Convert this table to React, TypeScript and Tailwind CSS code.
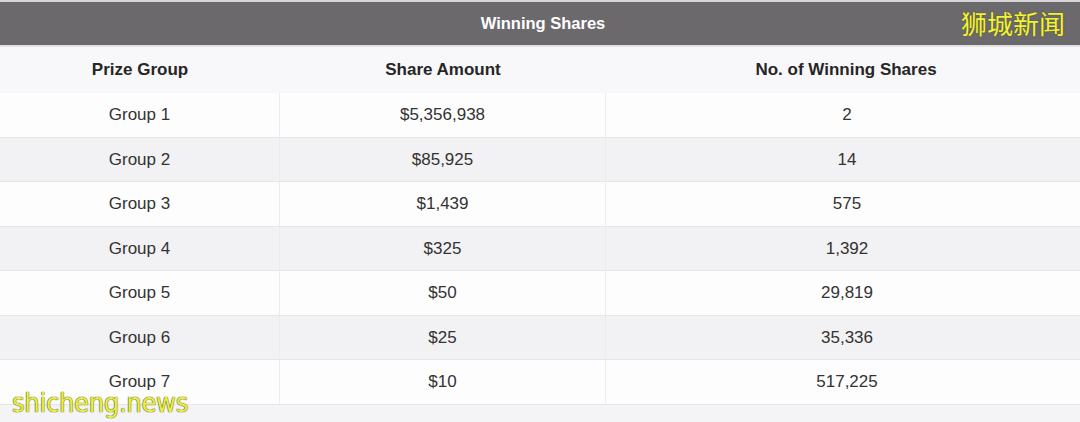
import React from "react";

const rows = [
  ["Group 1", "$5,356,938", "2"],
  ["Group 2", "$85,925", "14"],
  ["Group 3", "$1,439", "575"],
  ["Group 4", "$325", "1,392"],
  ["Group 5", "$50", "29,819"],
  ["Group 6", "$25", "35,336"],
  ["Group 7", "$10", "517,225"],
];

export default function App() {
  return (
    <div
      className="relative w-[1080px] h-[422px] overflow-hidden bg-[#f4f3f6] text-[#333]"
      style={{ fontFamily: '"Liberation Sans", Arial, sans-serif' }}
    >
      <div className="h-[2px] bg-[#d6d5d8]" />
      <div className="h-[43px] bg-[#6b696c] flex items-center justify-center">
        <span className="text-white font-bold text-[16.5px] ml-[6px]">Winning Shares</span>
      </div>
      <div className="h-[2px] bg-[#e2e1e4]" />
      <div className="grid grid-cols-[280px_326px_1fr] h-[46px] bg-[#f8f7f9] items-center text-[17px] font-bold text-[#262626]">
        <div className="text-center">Prize Group</div>
        <div className="text-center">Share Amount</div>
        <div className="text-center pl-[6px]">No. of Winning Shares</div>
      </div>
      {rows.map((r, i) => (
        <div
          key={i}
          className={`grid grid-cols-[280px_326px_1fr] text-[17px] border-b border-[#e6e5e8] ${
            i % 2 === 0 ? "bg-[#fdfdfe] h-[45px]" : "bg-[#f2f1f4] h-[44px]"
          }`}
        >
          <div className="flex items-center justify-center border-r border-[#ecebee]">{r[0]}</div>
          <div className="flex items-center justify-center border-r border-[#ecebee]">{r[1]}</div>
          <div className="flex items-center justify-center pl-[8px]">{r[2]}</div>
        </div>
      ))}
      <div
        className="absolute left-[961px] top-[10px] text-[26px] leading-none text-[#f2f23c]"
        style={{
          fontFamily: '"Noto Sans CJK SC", sans-serif',
          textShadow: "0 0 1px #5a5a20, 0 0 1px #5a5a20",
        }}
      >
        狮城新闻
      </div>
      <div
        className="absolute left-[12px] top-[389px] text-[27px] leading-none tracking-[-0.3px] text-[#eaf03c]"
        style={{
          fontFamily: '"DejaVu Sans Condensed", "Liberation Sans", sans-serif',
          textShadow: "0 0 1px #4a4a10, 0 0 1px #4a4a10",
        }}
      >
        shicheng.news
      </div>
    </div>
  );
}
